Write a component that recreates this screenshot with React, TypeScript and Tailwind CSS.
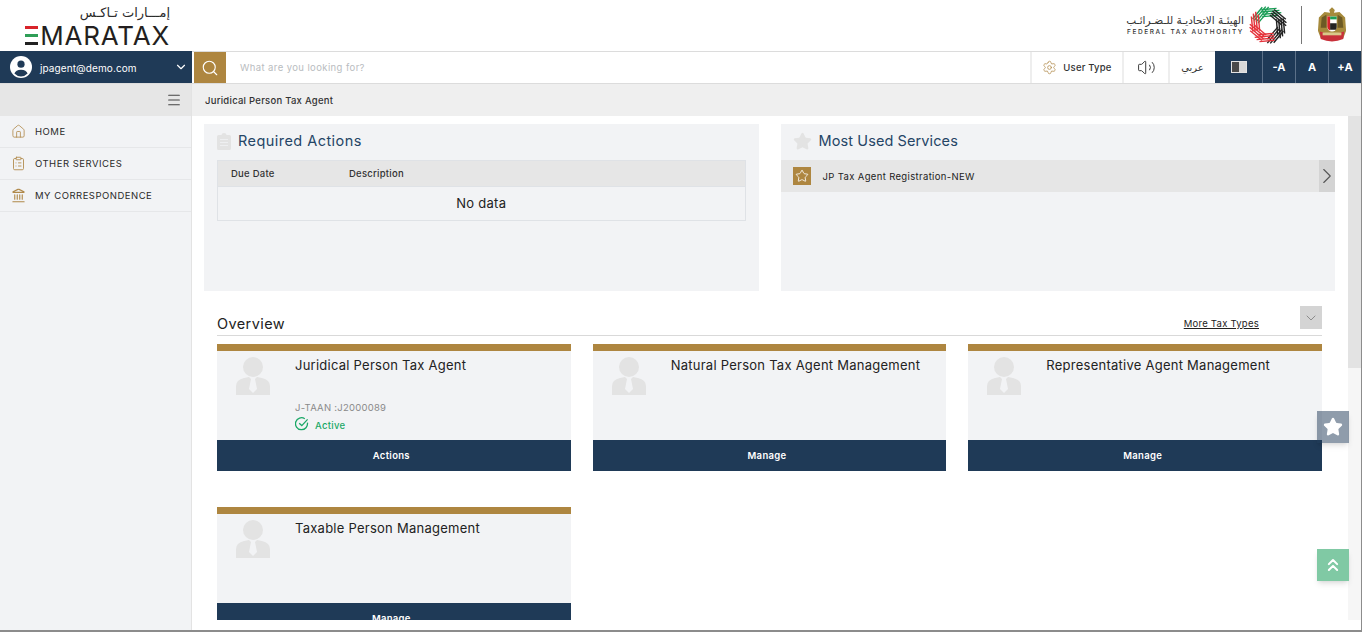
import { ChevronDown, ChevronRight, ChevronsUp, ClipboardList, House, Landmark, Menu, Search, Settings, Star, Volume2 } from 'lucide-react';

const font = "font-['Inter','Liberation_Sans',sans-serif]";

function EmaraLogo() {
  return (
    <div className="flex w-[192px] flex-col items-end pr-[22px] pt-[4px]">
      <div className="h-[22px] font-['DejaVu_Sans',sans-serif] text-[13px] leading-[18px] text-[#2b2b2b]" dir="rtl">
        إمـــارات تـاكـس
      </div>
      <div className="flex h-[19px] items-center">
        <div className="mr-[2px] flex h-[19px] w-[13px] flex-col justify-between">
          <span className="h-[3px] bg-[#d8232a]" />
          <span className="h-[3px] bg-[#2f9e57]" />
          <span className="h-[3px] bg-[#222]" />
        </div>
        <span className="text-[26px] leading-[19px] font-normal tracking-[0.8px] text-[#231f20]">MARATAX</span>
      </div>
    </div>
  );
}

function RingLogo() {
  const segs = [
    { c: '#1b9e57', r: -45 },
    { c: '#1b9e57', r: 0 },
    { c: '#222222', r: 45 },
    { c: '#222222', r: 90 },
    { c: '#222222', r: 135 },
    { c: '#e5343c', r: 180 },
    { c: '#e5343c', r: 225 },
    { c: '#e5343c', r: 270 },
  ];
  return (
    <svg viewBox="0 0 40 40" className="h-[38px] w-[38px]">
      {segs.map((s, i) => (
        <g key={i} transform={`rotate(${s.r} 20 20)`} stroke={s.c} strokeWidth="1.5" fill="none">
          <path d="M13 4 L29 2.5" />
          <path d="M13 6.4 L32 4.6" />
          <path d="M13.5 8.8 L34 7" />
          <path d="M14 11.2 L31 9.8" />
        </g>
      ))}
    </svg>
  );
}

function Emblem() {
  return (
    <svg viewBox="0 0 32 40" className="h-[38px] w-[30px]">
      <path d="M16 1 l3 3 l-1 3 l6 -1 l6 6 l1 14 l-3 8 l-6 -1 l-6 2 l-6 -2 l-6 1 l-3 -8 l1 -14 l6 -6 l6 1 l-1 -3 z" fill="#a68a3c" />
      <path d="M5 12 l5 -3 v14 h-6z M27 12 l-5 -3 v14 h6z" fill="#6d5a25" />
      <path d="M11 11 h10 v11 a5 5 0 0 1 -10 0z" fill="#fff" />
      <path d="M11 11 h3 v15 a5 5 0 0 1 -3 -4z" fill="#d8232a" />
      <path d="M14 11 h7 v3 h-7z" fill="#1b9e57" />
      <path d="M14 18 h7 v4 a5 5 0 0 1 -1 3 h-6z" fill="#222" />
      <path d="M3 27 q13 4 26 0 l-1 8 q-12 5 -24 0z" fill="#c8303a" />
      <path d="M6 28 h20 v3 h-20z" fill="#d9c98a" />
    </svg>
  );
}

function Avatar() {
  return (
    <svg viewBox="0 0 22 22" className="h-[22px] w-[22px]">
      <circle cx="11" cy="11" r="11" fill="#fff" />
      <circle cx="11" cy="8.2" r="3.6" fill="#1f3a57" />
      <path d="M4.4 17.5 a6.8 5 0 0 1 13.2 0 a9 9 0 0 1 -13.2 0z" fill="#1f3a57" />
    </svg>
  );
}

function PersonIcon() {
  return (
    <svg viewBox="0 0 34 38" className="h-[38px] w-[34px] shrink-0">
      <circle cx="17" cy="10" r="10" fill="#e3e3e3" />
      <path d="M0 38 v-9 q0 -6 8 -8 l5 -1 l2 2 l-2 10 l4 4 l4 -4 l-2 -10 l2 -2 l5 1 q8 2 8 8 v9z" fill="#e3e3e3" />
    </svg>
  );
}

function ClipboardIcon() {
  return (
    <svg viewBox="0 0 14 17" className="h-[17px] w-[14px] shrink-0">
      <path d="M1.5 2 h3 a2.5 2 0 0 1 5 0 h3 a1.5 1.5 0 0 1 1.5 1.5 v12 a1.5 1.5 0 0 1 -1.5 1.5 h-11 a1.5 1.5 0 0 1 -1.5 -1.5 v-12 a1.5 1.5 0 0 1 1.5 -1.5z" fill="#e3e3e3" />
      <path d="M3 6.5 h8 M3 9.5 h8 M3 12.5 h8" stroke="#eeeff1" strokeWidth="1" />
    </svg>
  );
}

function SideItem({ icon, label }: { icon: React.ReactNode; label: string }) {
  return (
    <div className="flex h-[32px] items-center border-b border-[#e6e7e9] pl-[11px]">
      <span className="flex w-[24px] text-[#b0894a]">{icon}</span>
      <span className="pt-[2px] text-[9.5px] font-normal tracking-[0.5px] text-[#2a2a2a]">{label}</span>
    </div>
  );
}

function TaxCard({ title, button, children }: { title: string; button: string; children?: React.ReactNode }) {
  return (
    <div className="flex h-[127px] flex-col">
      <div className="h-[7px] shrink-0 bg-[#ae8640]" />
      <div className="flex flex-1 bg-[#f2f3f5] pl-[19px] pt-[6px]">
        <PersonIcon />
        <div className="flex-1 pl-[25px]">
          <div className="text-[13px] leading-[17px] tracking-[0.25px] text-[#222]">{title}</div>
          {children}
        </div>
      </div>
      <div className="flex h-[31px] shrink-0 items-center justify-center bg-[#1f3a57] pr-[5px] pt-[2px] text-[9.5px] font-semibold tracking-[0.3px] text-white">
        {button}
      </div>
    </div>
  );
}

export default function App() {
  return (
    <div className={`${font} flex h-screen w-full flex-col overflow-hidden border-r border-b-2 border-[#8c8c8c] bg-white`}>
      <header className="flex h-[51px] shrink-0 items-start justify-between">
        <EmaraLogo />
        <div className="flex items-center pt-[6px]">
          <div className="flex flex-col items-end pr-[5px]">
            <div className="font-['DejaVu_Sans',sans-serif] text-[10.5px] leading-[14px] text-[#333]" dir="rtl">
              الهيئـة الاتحاديـة للـضـرائـب
            </div>
            <div className="text-[6.5px] leading-[11px] font-medium tracking-[1.6px] text-[#333]">FEDERAL TAX AUTHORITY</div>
          </div>
          <RingLogo />
          <div className="ml-[14px] mr-[15px] h-[38px] w-px bg-[#777]" />
          <div className="mr-[14px]">
            <Emblem />
          </div>
        </div>
      </header>

      <div className="flex h-[33px] shrink-0 border-b border-[#dcdcdc]">
        <div className="flex w-[192px] items-center bg-[#1f3a57] pl-[10px] pr-[4px] text-white">
          <Avatar />
          <span className="ml-[8px] flex-1 pt-[2px] text-[10px] font-normal tracking-[0.1px]">jpagent@demo.com</span>
          <ChevronDown size={14} />
        </div>
        <div className="flex min-w-0 flex-1 border-t border-[#dcdcdc]">
          <div className="ml-[2px] flex w-[32px] items-center justify-center bg-[#ae8640] text-white">
            <Search size={18} strokeWidth={1.5} />
          </div>
          <div className="flex flex-1 items-center pl-[14px] pt-[2px] text-[9.5px] tracking-[0.4px] text-[#b9bcc0]">What are you looking for?</div>
          <div className="flex w-[92px] items-center justify-center gap-[6px] border-l-2 border-[#eeeeee] text-[#333]">
            <Settings size={15} strokeWidth={1.2} className="text-[#b0894a]" />
            <span className="pt-[2px] text-[9.5px] font-medium tracking-[0.2px]">User Type</span>
          </div>
          <div className="flex w-[46px] items-center justify-center border-l-2 border-[#eeeeee] text-[#333]">
            <Volume2 size={19} strokeWidth={1.2} />
          </div>
          <div className="flex w-[47px] items-center justify-center border-l-2 border-[#eeeeee] font-['DejaVu_Sans',sans-serif] text-[10px] text-[#333]">
            عربي
          </div>
        </div>
        <div className="flex w-[47px] items-center justify-center bg-[#1f3a57]">
          <div className="flex h-[12px] w-[16px] border border-[#e3e3e3]">
            <span className="w-1/2 bg-[#4a4a4a]" />
            <span className="w-1/2 bg-[#d9d9d9]" />
          </div>
        </div>
        {['-A', 'A', '+A'].map((a) => (
          <div key={a} className="flex w-[33px] items-center justify-center border-l border-[#5c7189] bg-[#1f3a57] text-[11px] font-bold text-white">
            {a}
          </div>
        ))}
      </div>

      <div className="flex min-h-0 flex-1">
        <aside className="w-[192px] shrink-0 border-r border-[#e3e3e3] bg-[#f2f3f5]">
          <div className="flex h-[32px] items-center justify-end bg-[#e6e6e6] pr-[9px] text-[#444]">
            <Menu size={16} strokeWidth={1.6} />
          </div>
          <SideItem icon={<House size={15} strokeWidth={1.3} />} label="HOME" />
          <SideItem icon={<ClipboardList size={15} strokeWidth={1.4} />} label="OTHER SERVICES" />
          <SideItem icon={<Landmark size={15} strokeWidth={1.8} />} label="MY CORRESPONDENCE" />
        </aside>

        <main className="relative flex min-w-0 flex-1 flex-col pb-[10px]">
          <div className="flex h-[32px] shrink-0 items-center bg-[#efefef] pl-[13px] pt-[3px] text-[9.5px] font-medium tracking-[0.25px] text-[#333]">
            Juridical Person Tax Agent
          </div>
          <div className="flex min-h-0 flex-1">
            <div className="min-w-0 flex-1 overflow-hidden pl-[12px] pr-[13px] pt-[8px]">
              <div className="grid grid-cols-2 gap-[22px]">
                <section className="h-[167px] bg-[#f2f3f5] px-[13px]">
                  <div className="flex h-[36px] items-center gap-[7px] pb-[2px]">
                    <ClipboardIcon />
                    <h2 className="text-[14.5px] font-normal tracking-[0.45px] text-[#254566]">Required Actions</h2>
                  </div>
                  <div className="border border-[#dfe2e6]">
                    <div className="flex h-[25px] items-center bg-[#e6e6e6] pl-[13px] pt-[2px] text-[9.5px] font-medium tracking-[0.25px] text-[#333]">
                      <span className="w-[118px]">Due Date</span>
                      <span>Description</span>
                    </div>
                    <div className="flex h-[34px] items-center justify-center border-t border-[#dfe2e6] text-[13px] tracking-[0.25px] text-[#222]">No data</div>
                  </div>
                </section>
                <section className="h-[167px] bg-[#f2f3f5]">
                  <div className="flex h-[36px] items-center gap-[7px] pb-[2px] pl-[12px]">
                    <Star size={19} className="text-[#e3e3e3]" fill="#e3e3e3" />
                    <h2 className="text-[14.5px] font-normal tracking-[0.1px] text-[#254566]">Most Used Services</h2>
                  </div>
                  <div className="flex h-[32px] items-center bg-[#e6e6e6] pl-[12px]">
                    <span className="flex h-[18px] w-[18px] items-center justify-center bg-[#ae8640] text-white">
                      <Star size={14} strokeWidth={1.4} />
                    </span>
                    <span className="ml-[12px] flex-1 pt-[3px] text-[9.5px] font-normal tracking-[0.35px] text-[#222]">JP Tax Agent Registration-NEW</span>
                    <span className="flex h-full w-[16px] items-center justify-center overflow-hidden bg-[#d4d4d4] text-[#555]">
                      <ChevronRight size={26} strokeWidth={1} className="shrink-0" />
                    </span>
                  </div>
                </section>
              </div>

              <div className="mx-[13px]">
                <div className="flex h-[45px] items-end border-b border-[#d9d9d9] pb-[2px]">
                  <h3 className="flex-1 text-[14.5px] leading-[18px] tracking-[0.4px] text-[#222]">Overview</h3>
                  <span className="mb-[2px] text-[9.5px] font-normal tracking-[0.25px] text-[#222] underline">More Tax Types</span>
                  <span className="ml-[41px] mb-[4px] flex h-[23px] w-[22px] items-center justify-center bg-[#d4d4d4] text-[#666]">
                    <ChevronDown size={16} strokeWidth={1} />
                  </span>
                </div>
                <div className="mt-[8px] grid grid-cols-3 gap-x-[22px] gap-y-[36px]">
                  <TaxCard title="Juridical Person Tax Agent" button="Actions">
                    <div className="mt-[27px] text-[9.5px] tracking-[0.25px] text-[#8a8a8a]">J-TAAN :J2000089</div>
                    <div className="flex items-center gap-[6px] text-[#1aa866]">
                      <svg viewBox="0 0 14 14" className="h-[14px] w-[14px]" fill="none" stroke="currentColor" strokeWidth="1.3">
                        <path d="M12.4 5.6 A6 6 0 1 1 9.8 1.7" />
                        <path d="M4.2 6.2 L6.8 8.6 L12.6 2.4" />
                      </svg>
                      <span className="mt-[4px] text-[9.5px] font-medium tracking-[0.3px]">Active</span>
                    </div>
                  </TaxCard>
                  <TaxCard title="Natural Person Tax Agent Management" button="Manage" />
                  <TaxCard title="Representative Agent Management" button="Manage" />
                  <TaxCard title="Taxable Person Management" button="Manage" />
                </div>
              </div>
            </div>
            <div className="w-[13px] shrink-0 bg-[#f6f6f6]">
              <div className="h-[252px] bg-[#e3e3e3]" />
            </div>
          </div>

          <div className="absolute right-[12px] top-[327px] flex h-[32px] w-[32px] items-center justify-center bg-[#1f3a57]/50 text-white shadow-md">
            <Star size={20} fill="currentColor" />
          </div>
          <div className="absolute right-[12px] top-[465px] flex h-[32px] w-[32px] items-center justify-center bg-[#80c9a4] text-white shadow-md">
            <ChevronsUp size={20} strokeWidth={2.4} />
          </div>
        </main>
      </div>
    </div>
  );
}
